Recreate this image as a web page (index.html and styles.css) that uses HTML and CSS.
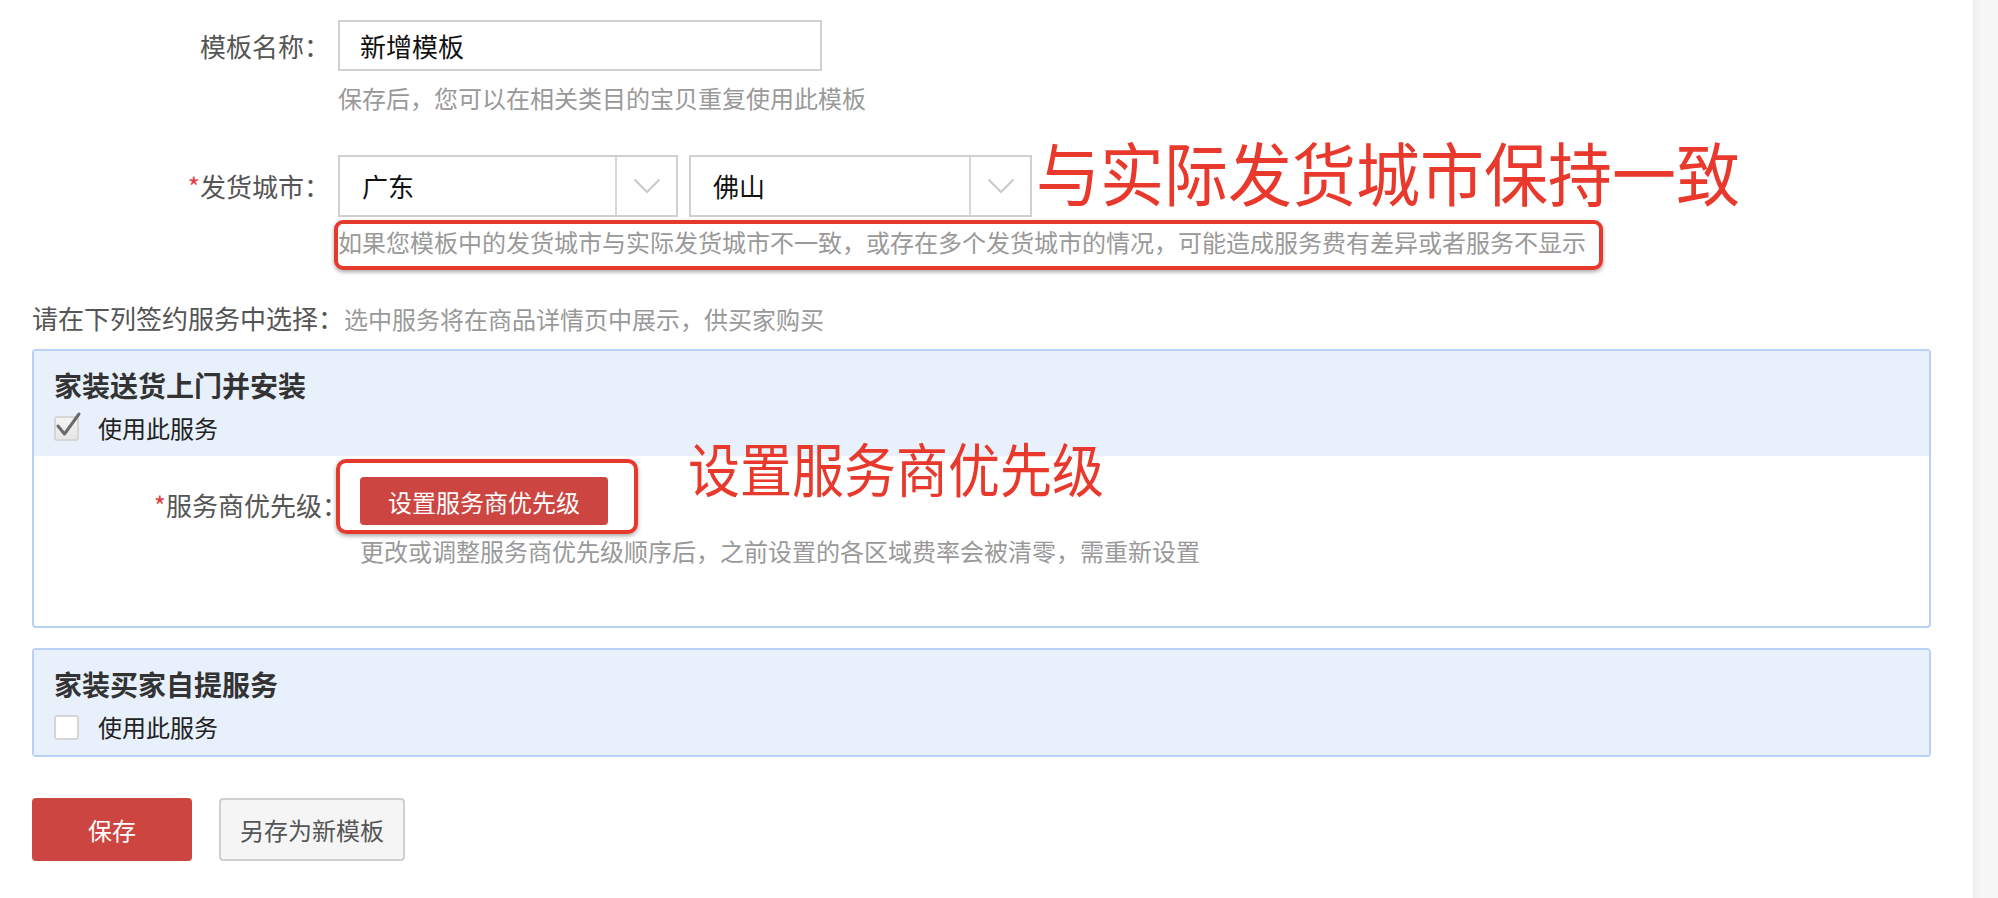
FILE: index.html
```html
<!DOCTYPE html>
<html lang="zh-CN">
<head>
<meta charset="utf-8">
<title>模板</title>
<link rel="stylesheet" href="styles.css">
</head>
<body>
<div class="page">
  <main class="content">
    <div class="form-row row-name">
      <div class="label">模板名称：</div>
      <div class="control">
        <div class="text-input">新增模板</div>
        <p class="hint">保存后，您可以在相关类目的宝贝重复使用此模板</p>
      </div>
    </div>

    <div class="form-row row-city">
      <div class="label"><span class="req">*</span>发货城市：</div>
      <div class="control">
        <div class="select-line">
          <div class="select">
            <span class="select-value">广东</span>
            <span class="select-arrow"><svg width="28" height="16" viewBox="0 0 28 16"><path d="M1.5 1.5 L14 14 L26.5 1.5" fill="none" stroke="#c9c9c9" stroke-width="2"/></svg></span>
          </div>
          <div class="select select-second">
            <span class="select-value">佛山</span>
            <span class="select-arrow"><svg width="28" height="16" viewBox="0 0 28 16"><path d="M1.5 1.5 L14 14 L26.5 1.5" fill="none" stroke="#c9c9c9" stroke-width="2"/></svg></span>
          </div>
          <div class="annot annot-city">与实际发货城市保持一致</div>
        </div>
        <p class="hint hint-city"><span class="boxed">如果您模板中的发货城市与实际发货城市不一致，或存在多个发货城市的情况，可能造成服务费有差异或者服务不显示</span></p>
      </div>
    </div>

    <p class="intro"><span class="intro-label">请在下列签约服务中选择：</span><span class="intro-hint">选中服务将在商品详情页中展示，供买家购买</span></p>

    <section class="panel">
      <div class="panel-head">
        <h3 class="panel-title">家装送货上门并安装</h3>
        <label class="check">
          <span class="box box-checked"><svg class="tick" width="30" height="30" viewBox="0 0 30 30"><path d="M4 15 L10.5 23 L25 3" fill="none" stroke="#6a6a6a" stroke-width="3" stroke-linecap="round" stroke-linejoin="round"/></svg></span>
          <span>使用此服务</span>
        </label>
      </div>
      <div class="panel-body">
        <div class="prio-row">
          <div class="label prio-label"><span class="req">*</span>服务商优先级：</div>
          <div class="control">
            <div class="btn-line">
              <span class="btn-wrap"><button class="btn-red" type="button">设置服务商优先级</button></span>
              <span class="annot annot-prio">设置服务商优先级</span>
            </div>
            <p class="hint hint-prio">更改或调整服务商优先级顺序后，之前设置的各区域费率会被清零，需重新设置</p>
          </div>
        </div>
      </div>
    </section>

    <section class="panel panel-second">
      <div class="panel-head">
        <h3 class="panel-title">家装买家自提服务</h3>
        <label class="check">
          <span class="box"></span>
          <span>使用此服务</span>
        </label>
      </div>
    </section>

    <div class="actions">
      <button class="btn-save" type="button">保存</button>
      <button class="btn-alt" type="button">另存为新模板</button>
    </div>
  </main>
  <div class="scrollbar"></div>
</div>
</body>
</html>
```

FILE: styles.css
```css
* {
  box-sizing: border-box;
  margin: 0;
  padding: 0;
}

body {
  margin: 0;
  font-family: "Noto Sans CJK SC", "Noto Sans", sans-serif;
  color: #555;
  background: #fff;
}

.page {
  display: flex;
  min-height: 898px;
}

.content {
  flex: 1;
  padding: 20px 42px 0 32px;
}

.scrollbar {
  width: 25px;
  background: linear-gradient(to right, #efefef, #f6f6f6 30%, #f7f7f7);
  border-left: 1px solid #ebebeb;
}

.form-row {
  display: grid;
  grid-template-columns: 298px 1fr;
  column-gap: 8px;
}

.label {
  text-align: right;
  font-size: 26px;
  color: #555;
  white-space: nowrap;
}

.req {
  color: #e4393c;
}

.row-name .label {
  line-height: 51px;
}

.text-input {
  width: 484px;
  height: 51px;
  border: 2px solid #d0d0d0;
  padding-left: 20px;
  font-size: 26px;
  line-height: 47px;
  color: #111;
}

.hint {
  font-size: 24px;
  line-height: 32px;
  color: #999;
  white-space: nowrap;
}

.row-name .hint {
  margin-top: 11px;
}

.row-city {
  margin-top: 41px;
}

.row-city .label {
  line-height: 62px;
}

.select-line {
  display: flex;
  align-items: flex-start;
}

.select {
  display: flex;
  width: 340px;
  height: 62px;
  border: 2px solid #d0d0d0;
}

.select-second {
  margin-left: 11px;
  width: 343px;
}

.select-value {
  flex: 1;
  padding-left: 22px;
  font-size: 26px;
  line-height: 58px;
  color: #111;
}

.select-arrow {
  width: 61px;
  border-left: 2px solid #d8d8d8;
  display: flex;
  align-items: center;
  justify-content: center;
}

.annot {
  color: #e8392c;
  white-space: nowrap;
}

.annot-city {
  font-size: 64px;
  line-height: 64px;
  margin-left: 4px;
  margin-top: -16px;
  transform: scaleY(1.08);
}

.hint-city {
  margin-top: 9px;
}

.boxed {
  position: relative;
  display: inline-block;
}

.boxed::after {
  content: "";
  position: absolute;
  top: -6px;
  left: -4px;
  right: -17px;
  bottom: -12px;
  border: 4px solid #e5392d;
  border-radius: 9px;
  box-shadow: 0 2px 4px rgba(0, 0, 0, 0.35);
}

.intro {
  margin-top: 44px;
  font-size: 24px;
  line-height: 32px;
  white-space: nowrap;
}

.intro-label {
  color: #555;
  font-size: 26px;
}

.intro-hint {
  color: #999;
}

.panel {
  margin-top: 14px;
  border: 2px solid #b9d1f4;
  border-radius: 4px;
}

.panel-second {
  margin-top: 20px;
}

.panel-head {
  background: #e7f0fb;
  padding: 18px 20px 12px;
}

.panel-title {
  font-size: 28px;
  line-height: 32px;
  font-weight: 700;
  color: #333;
}

.check {
  display: flex;
  align-items: center;
  margin-top: 11px;
  font-size: 24px;
  line-height: 32px;
  color: #222;
}

.box {
  position: relative;
  width: 25px;
  height: 25px;
  border: 2px solid #d6d6d6;
  border-radius: 3px;
  background: #fff;
  margin-right: 19px;
}

.box-checked {
  background: linear-gradient(#f4f4f4, #e6e6e6);
}

.tick {
  position: absolute;
  left: -2px;
  top: -7px;
}

.panel-body {
  padding: 21px 0 59px;
}

.prio-row {
  display: grid;
  grid-template-columns: 314px 1fr;
  column-gap: 12px;
}

.prio-label {
  line-height: 48px;
  margin-top: 4px;
}

.btn-line {
  display: flex;
  align-items: flex-start;
}

.btn-wrap {
  position: relative;
  display: inline-block;
}

.btn-wrap::after {
  content: "";
  position: absolute;
  top: -18px;
  left: -24px;
  right: -30px;
  bottom: -9px;
  border: 4px solid #e5392d;
  border-radius: 10px;
  box-shadow: 0 2px 4px rgba(0, 0, 0, 0.35);
}

.btn-red {
  display: block;
  width: 248px;
  height: 48px;
  background: #cd4541;
  color: #fff;
  border: none;
  border-radius: 4px;
  font-family: inherit;
  font-size: 24px;
}

.annot-prio {
  font-size: 52px;
  line-height: 56px;
  margin-left: 80px;
  margin-top: -38px;
  transform: scaleY(1.12);
}

.hint-prio {
  margin-top: 10px;
}

.actions {
  display: flex;
  gap: 27px;
  margin-top: 41px;
}

.btn-save {
  width: 160px;
  height: 63px;
  background: #cc4540;
  color: #fff;
  border: none;
  border-radius: 4px;
  font-family: inherit;
  font-size: 24px;
}

.btn-alt {
  width: 186px;
  height: 63px;
  background: #f5f5f5;
  border: 2px solid #cfcfcf;
  border-radius: 4px;
  color: #555;
  font-family: inherit;
  font-size: 24px;
}
```
